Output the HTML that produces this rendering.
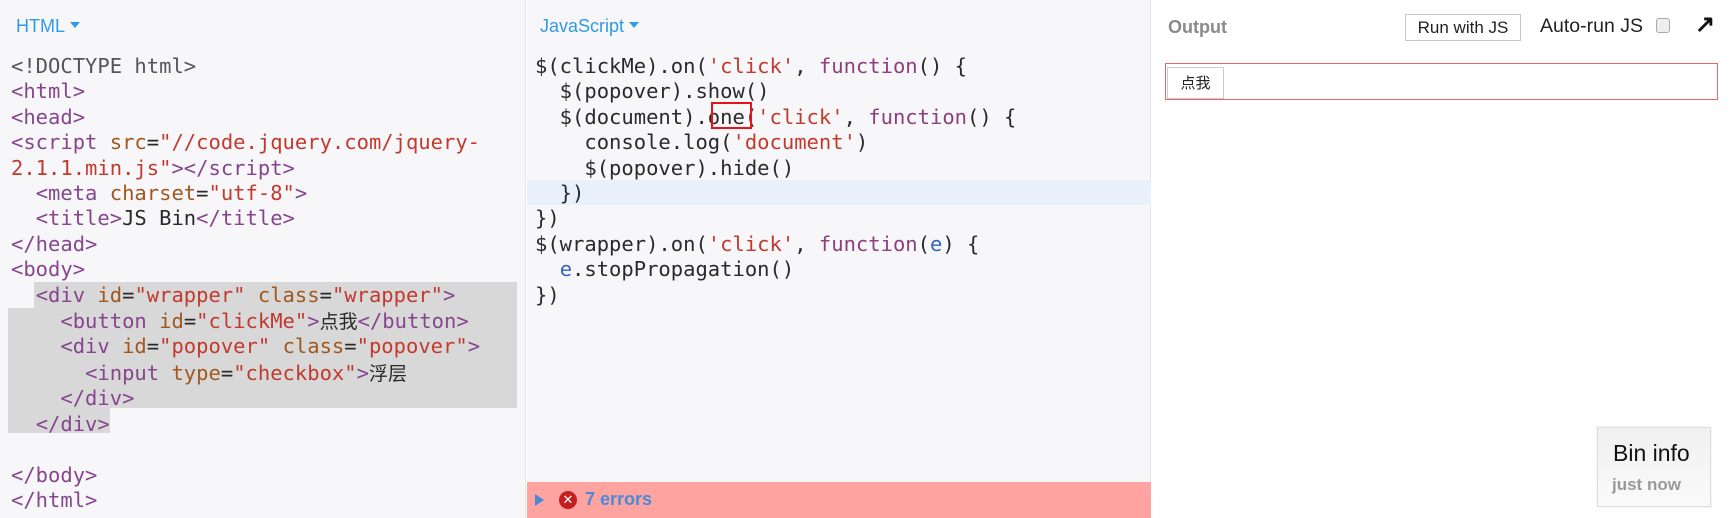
<!DOCTYPE html>
<html><head><meta charset="utf-8"><style>
*{margin:0;padding:0;box-sizing:border-box}
body{width:1729px;height:518px;overflow:hidden;position:relative;background:#fff;font-family:"Liberation Sans",sans-serif}
.p{position:absolute;top:0;height:518px}
#h{left:0;width:526px;background:#f7f6f9;border-right:1px solid #e4e4e8}
#j{left:527px;width:624px;background:#f7f6f9;border-right:1px solid #e4e4e8}
#o{left:1152px;width:577px;background:#fff}
.hd{position:absolute;top:16px;font-size:18px;color:#2f9ae6}
.hd:after{content:"";display:inline-block;margin-left:5px;border:5px solid transparent;border-top:6px solid #2f9ae6;vertical-align:-1px}
pre{position:absolute;top:54px;font-family:"DejaVu Sans Mono","Liberation Mono","Noto Sans CJK SC",monospace;font-size:20.5px;line-height:25.4px;color:#2a2a2a;letter-spacing:0}
.t{color:#86468e}.a{color:#a0581e}.s{color:#c23a2e}.k{color:#8e3f7e}.v{color:#3465c4}.d{color:#555}
.cj{font-family:"Noto Sans CJK SC",sans-serif;font-size:19px}
</style></head><body>
<div class="p" id="h">
<div class="hd" style="left:16px">HTML</div>
<div style="position:absolute;left:34px;top:282px;width:483px;height:26px;background:#d8d8d8"></div>
<div style="position:absolute;left:8px;top:308px;width:509px;height:100px;background:#d8d8d8"></div>
<div style="position:absolute;left:8px;top:408px;width:102px;height:25px;background:#d8d8d8"></div>
<pre style="left:11px"><span class="d">&lt;!DOCTYPE html&gt;</span>
<span class="t">&lt;html&gt;</span>
<span class="t">&lt;head&gt;</span>
<span class="t">&lt;script</span> <span class="a">src</span>=<span class="s">"//code.jquery.com/jquery-</span>
<span class="s">2.1.1.min.js"</span><span class="t">&gt;&lt;/script&gt;</span>
  <span class="t">&lt;meta</span> <span class="a">charset</span>=<span class="s">"utf-8"</span><span class="t">&gt;</span>
  <span class="t">&lt;title&gt;</span>JS Bin<span class="t">&lt;/title&gt;</span>
<span class="t">&lt;/head&gt;</span>
<span class="t">&lt;body&gt;</span>
  <span class="t">&lt;div</span> <span class="a">id</span>=<span class="s">"wrapper"</span> <span class="a">class</span>=<span class="s">"wrapper"</span><span class="t">&gt;</span>
    <span class="t">&lt;button</span> <span class="a">id</span>=<span class="s">"clickMe"</span><span class="t">&gt;</span><span class="cj">点我</span><span class="t">&lt;/button&gt;</span>
    <span class="t">&lt;div</span> <span class="a">id</span>=<span class="s">"popover"</span> <span class="a">class</span>=<span class="s">"popover"</span><span class="t">&gt;</span>
      <span class="t">&lt;input</span> <span class="a">type</span>=<span class="s">"checkbox"</span><span class="t">&gt;</span><span class="cj">浮层</span>
    <span class="t">&lt;/div&gt;</span>
  <span class="t">&lt;/div&gt;</span>

<span class="t">&lt;/body&gt;</span>
<span class="t">&lt;/html&gt;</span></pre>
</div>
<div class="p" id="j">
<div class="hd" style="left:13px">JavaScript</div>
<div style="position:absolute;left:0;top:180px;width:624px;height:25px;background:#e8f0fc"></div>
<pre style="left:8px">$(clickMe).on(<span class="s">'click'</span>, <span class="k">function</span>() {
  $(popover).show()
  $(document).one(<span class="s">'click'</span>, <span class="k">function</span>() {
    console.log(<span class="s">'document'</span>)
    $(popover).hide()
  })
})
$(wrapper).on(<span class="s">'click'</span>, <span class="k">function</span>(<span class="v">e</span>) {
  <span class="v">e</span>.stopPropagation()
})</pre>
<div style="position:absolute;left:184px;top:102px;width:41px;height:27px;border:2px solid #e4141a"></div>
<div style="position:absolute;left:0;top:482px;width:624px;height:36px;background:#ffa3a0">
<div style="position:absolute;left:8px;top:12px;border:6px solid transparent;border-left:9px solid #4a8ad8;border-right:0"></div>
<div style="position:absolute;left:32px;top:9px;width:18px;height:18px;border-radius:50%;background:#c41f1f;color:#fff;font-size:13px;line-height:18px;text-align:center">✕</div>
<div style="position:absolute;left:58px;top:7px;font-size:18px;font-weight:bold;color:#4a8ad8">7 errors</div>
</div>
</div>
<div class="p" id="o">
<div style="position:absolute;left:16px;top:17px;font-size:18px;font-weight:bold;color:#8a8a8a">Output</div>
<div style="position:absolute;left:253px;top:14px;width:116px;height:27px;border:1px solid #c8c8c8;background:#fff;font-size:17px;text-align:center;line-height:25px;color:#222">Run with JS</div>
<div style="position:absolute;left:388px;top:15px;font-size:19.5px;color:#222">Auto-run JS</div>
<div style="position:absolute;left:504px;top:18px;width:14px;height:15px;border:1px solid #aaa;border-radius:3px;background:#eee"></div>
<div style="position:absolute;left:543px;top:10px;font-size:24px;font-weight:bold;color:#111">↗</div>
<div style="position:absolute;left:13px;top:63px;width:553px;height:37px;border:1.5px solid #e66"></div>
<div style="position:absolute;left:15px;top:67px;width:57px;height:32px;border:1px solid #ccc;background:#fff;font-family:'Noto Sans CJK SC',sans-serif;font-size:15px;text-align:center;line-height:30px;color:#222">点我</div>
<div style="position:absolute;left:445px;top:427px;width:114px;height:80px;border:1px solid #ddd;background:linear-gradient(#f0f0f0,#fafafa);box-shadow:0 0 2px rgba(0,0,0,.1)">
<div style="position:absolute;left:15px;top:12px;font-size:23px;color:#111">Bin info</div>
<div style="position:absolute;left:14px;top:47px;font-size:17px;font-weight:bold;color:#999">just now</div>
</div>
</div>
</body></html>
